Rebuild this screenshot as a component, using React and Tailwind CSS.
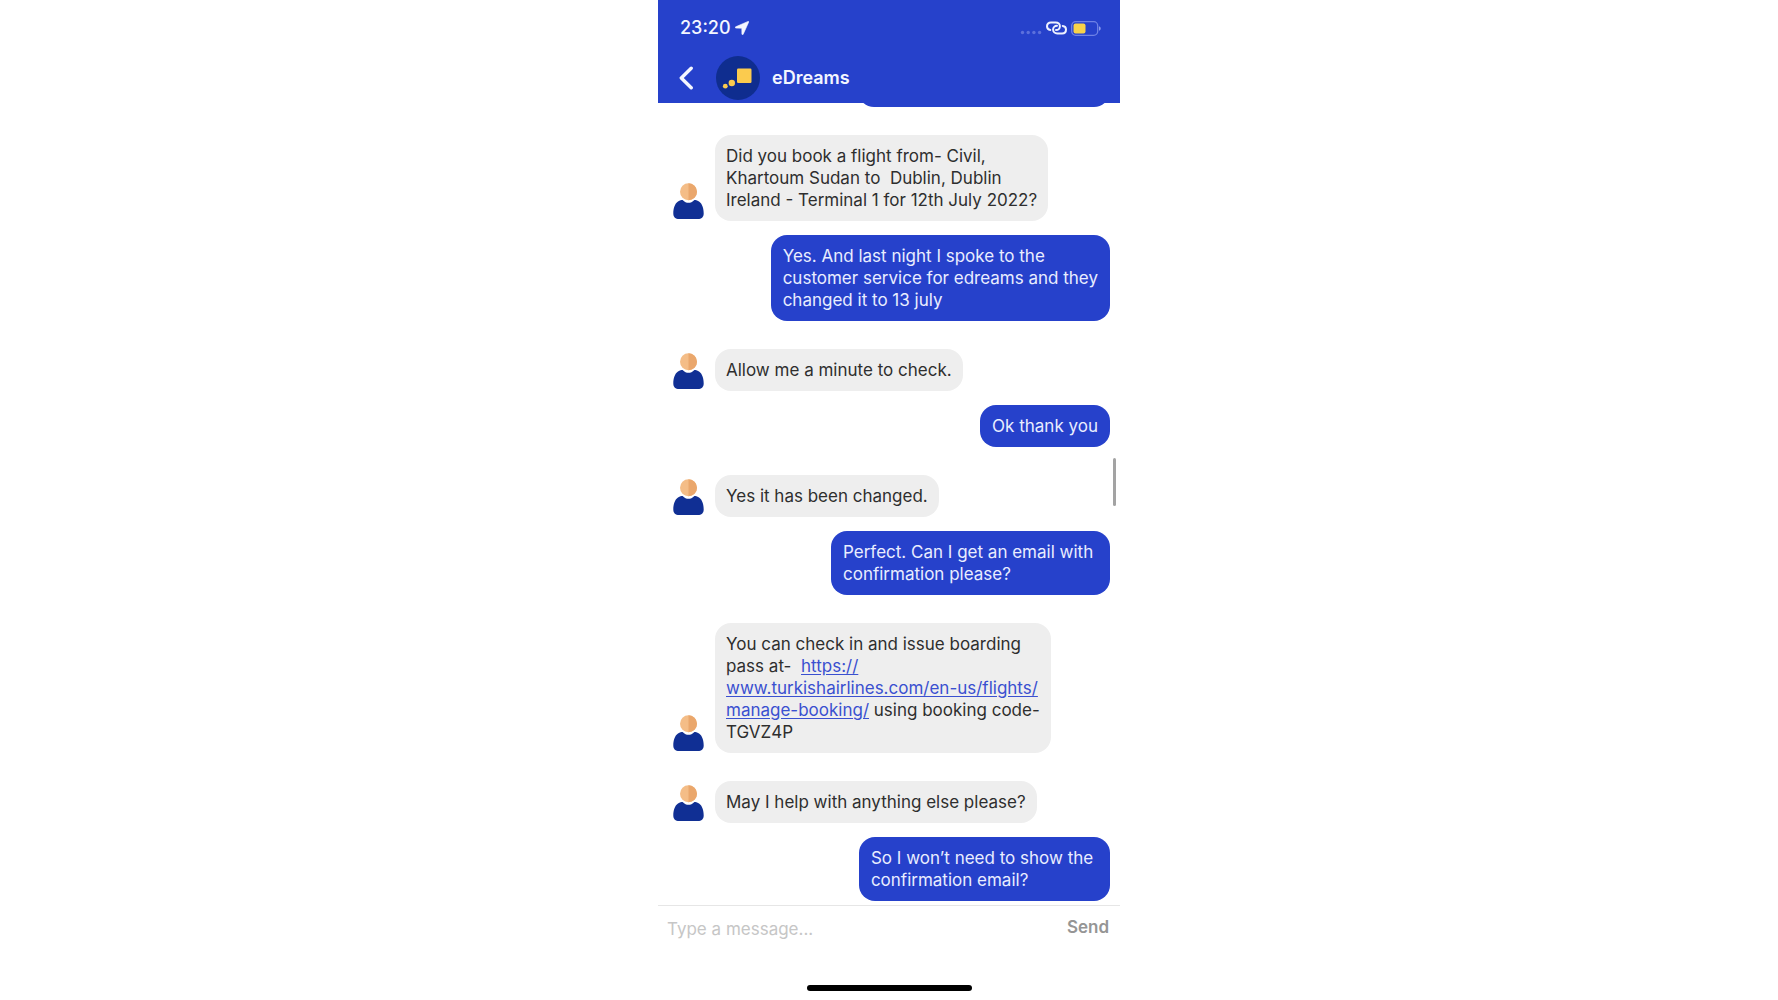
const MESSAGES = [
  { from: "agent", text: "Did you book a flight from- Civil,\nKhartoum Sudan to  Dublin, Dublin\nIreland - Terminal 1 for 12th July 2022?" },
  { from: "me", text: "Yes. And last night I spoke to the\ncustomer service for edreams and they\nchanged it to 13 july" },
  { from: "agent", text: "Allow me a minute to check." },
  { from: "me", text: "Ok thank you" },
  { from: "agent", text: "Yes it has been changed." },
  { from: "me", text: "Perfect. Can I get an email with \nconfirmation please?" },
  {
    from: "agent",
    text: (
      <>
        {"You can check in and issue boarding\npass at-  "}
        <a href="#manage-booking" className="text-[#3a50d0] underline underline-offset-2">
          {"https://\nwww.turkishairlines.com/en-us/flights/\nmanage-booking/"}
        </a>
        {" using booking code-\nTGVZ4P"}
      </>
    ),
  },
  { from: "agent", text: "May I help with anything else please?" },
  { from: "me", text: "So I won’t need to show the \nconfirmation email?" },
];

function Avatar() {
  return (
    <svg viewBox="0 0 31 36" className="mb-0.5 h-9 w-[31px] shrink-0" aria-hidden="true">
      <path
        d="M5 18.600C7 17.400 8.400 17 9.600 17c2 2.100 3.800 2.800 5.900 2.800s3.900-.7 5.900-2.800c1.200 0 2.600.4 4.600 1.600 3.300 2.200 4.700 7 4.700 11.800 0 3.600-2.200 5.600-5.800 5.600H6.100C2.500 36 .3 34 .3 30.400.3 25.600 1.700 20.800 5 18.600z"
        fill="#102f94"
      />
      <circle cx="15.500" cy="8.800" r="8.500" fill="#f4bd87" />
      <path d="M15.500.3a8.500 8.500 0 0 1 0 17z" fill="#eaa76c" />
    </svg>
  );
}

function AgentMessage({ children }) {
  return (
    <li className="mt-7 flex shrink-0 items-end gap-[11px] first:mt-0">
      <Avatar />
      <p className="rounded-2xl bg-[#eeeeee] px-[11px] py-2.5 whitespace-pre text-[#2e2e2e]">{children}</p>
    </li>
  );
}

function MyMessage({ children }) {
  return (
    <li className="mt-3.5 flex shrink-0 justify-end">
      <p className="rounded-2xl bg-[#2641cb] px-3 py-2.5 whitespace-pre text-[#e9edff]">{children}</p>
    </li>
  );
}

function StatusBar() {
  return (
    <div className="flex h-14 items-center justify-between pr-[19px] pl-[22px]">
      <div className="flex items-center gap-1 text-lg font-medium">
        <span>23:20</span>
        <svg viewBox="0 0 14 14" className="size-3.5" fill="currentColor" stroke="currentColor" strokeWidth=".6" strokeLinejoin="round" aria-hidden="true">
          <path d="M13.100.4.700 5.800c-.7.300-.6 1.300.3 1.300l5.800.1.100 5.800c0 .9 1 1 1.300.3L13.700 1c.2-.4-.2-.8-.6-.6z" />
        </svg>
      </div>
      <div className="flex items-center gap-1">
        <svg viewBox="0 0 22 14" className="h-3.5 w-[22px]" fill="#5c70dc" aria-hidden="true">
          <circle cx="2.500" cy="11.500" r="1.700" />
          <circle cx="8.200" cy="11.500" r="1.700" />
          <circle cx="13.900" cy="11.500" r="1.700" />
          <circle cx="19.600" cy="11.500" r="1.700" />
        </svg>
        <svg viewBox="0 0 21 14" className="h-3.5 w-[21px]" fill="none" stroke="#eef1ff" strokeWidth="2" strokeLinecap="round" aria-hidden="true">
          <path d="M4.300 8.900C2.300 8.700 1 7.300 1 5.300 1 3 2.600 1.400 4.900 1.400h4.900c2.300 0 4.100 1.600 4.100 3.800s-1.700 3.900-3.900 3.900" />
          <path d="M16.700 4.900c2 .2 3.300 1.600 3.300 3.600 0 2.300-1.600 4-3.900 4h-4.900c-2.300 0-4.100-1.700-4.100-3.900s1.700-3.800 3.900-3.800" />
        </svg>
        <svg viewBox="0 0 30 15" className="h-[15px] w-[30px]" aria-hidden="true">
          <rect x=".7" y=".7" width="26" height="13.600" rx="4" fill="none" stroke="#6f82e6" strokeWidth="1.300" />
          <rect x="2.500" y="2.500" width="12" height="10" rx="2" fill="#f8d24a" />
          <path d="M28 5.200c1.300.5 1.700 1.300 1.700 2.300s-.4 1.800-1.700 2.300z" fill="#8b9bee" />
        </svg>
      </div>
    </div>
  );
}

export default function App() {
  return (
    <div className="flex h-screen justify-center bg-white font-['Inter',sans-serif]">
      <main className="flex h-full w-full max-w-[462px] flex-col">
        <header className="shrink-0 bg-[#2641cb] text-[#f4f6ff]">
          <StatusBar />
          <div className="flex h-[47px] items-start pl-[21px]">
            <button type="button" aria-label="Back" className="mr-[23px] flex h-11 items-center">
              <svg viewBox="0 0 14 24" className="h-6 w-3.5" fill="none" stroke="currentColor" strokeWidth="3.400" strokeLinecap="round" strokeLinejoin="round">
                <path d="M12.200 2.200 2.300 12l9.900 9.800" />
              </svg>
            </button>
            <svg viewBox="0 0 44 44" className="mr-3 size-11" aria-hidden="true">
              <circle cx="22" cy="22" r="22" fill="#0f2d8f" />
              <g fill="#fbcb4e">
                <rect x="21" y="12.500" width="14.500" height="14.500" rx="1.200" />
                <circle cx="15.800" cy="27" r="3.200" />
                <circle cx="9.300" cy="30.200" r="2.400" />
              </g>
            </svg>
            <h1 className="text-lg leading-[44px] font-semibold">eDreams</h1>
          </div>
        </header>

        <section className="relative flex min-h-0 flex-1 flex-col justify-end overflow-hidden pr-2.5 pb-1 pl-[15px]">
          <div className="mb-7 h-16 w-[252px] shrink-0 self-end rounded-2xl bg-[#2641cb]" />
          <ul className="flex shrink-0 flex-col text-[17px] leading-[22px]">
            {MESSAGES.map((message, index) =>
              message.from === "me" ? (
                <MyMessage key={index}>{message.text}</MyMessage>
              ) : (
                <AgentMessage key={index}>{message.text}</AgentMessage>
              )
            )}
          </ul>
          <div className="absolute top-[355px] right-1 h-12 w-[3px] rounded-full bg-[#a3a3a3]" />
        </section>

        <footer className="flex h-[95px] shrink-0 flex-col justify-between border-t border-[#e6e6e6] pb-[9px]">
          <form className="flex h-[42px] items-center justify-between pr-[11px] pl-[9px]" onSubmit={(event) => event.preventDefault()}>
            <input
              type="text"
              aria-label="Type a message"
              placeholder="Type a message..."
              className="min-w-0 flex-1 pt-1 text-[17px] leading-6 outline-none placeholder:text-[#c6c6c6]"
            />
            <button type="submit" className="text-[17px] leading-6 font-semibold text-[#959595]">
              Send
            </button>
          </form>
          <div className="h-1.5 w-[165px] self-center rounded-full bg-black" />
        </footer>
      </main>
    </div>
  );
}
